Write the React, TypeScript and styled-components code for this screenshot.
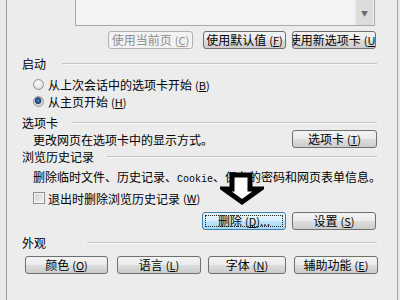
import styled, { createGlobalStyle, css } from "styled-components";

const GlobalStyle = createGlobalStyle`
  html, body {
    margin: 0;
    padding: 0;
    background: #e6e6e6;
  }
  body {
    font-family: "Noto Sans CJK SC", "Noto Sans", sans-serif;
    font-size: 12px;
    color: #000;
  }
`;

const Screen = styled.div`
  position: relative;
  width: 400px;
  height: 300px;
  overflow: hidden;
  display: flex;
  background: #e8e8e8;
`;

const Panel = styled.div`
  margin-left: 6px;
  width: 392px;
  box-sizing: border-box;
  padding: 0 20px 0 15px;
  border-left: 1px solid #9a9a9a;
  border-right: 1px solid #a8a8a8;
  background: #ececec;
  display: flex;
  flex-direction: column;
`;

const HomeBox = styled.div`
  margin-left: 53px;
  width: 300px;
  height: 26px;
  box-sizing: border-box;
  display: flex;
  justify-content: flex-end;
  border: 1px solid #a9a9a9;
  border-top: none;
  background: #f3f3f3;
`;

const ScrollBar = styled.div`
  width: 18px;
  margin-right: 1px;
  background: #dcdcdc;
  border-left: 1px solid #e8e8e8;
  display: flex;
  justify-content: center;
  align-items: flex-end;
  padding-bottom: 8px;
  box-sizing: border-box;
  color: #6a6a6a;
  font-size: 7px;
  line-height: 7px;
`;

const ButtonRow = styled.div<{ $mt: number; $justify?: string }>`
  display: flex;
  justify-content: ${(p) => p.$justify ?? "flex-end"};
  height: 18px;
  margin-top: ${(p) => p.$mt}px;
`;

const Button = styled.button<{
  $w: number;
  $ml?: number;
  $disabled?: boolean;
  $focus?: boolean;
}>`
  width: ${(p) => p.$w}px;
  height: 18px;
  margin: 0 0 0 ${(p) => p.$ml ?? 0}px;
  padding: 0;
  box-sizing: border-box;
  flex-shrink: 0;
  border: 1px solid #707070;
  border-radius: 3px;
  background: linear-gradient(#f3f3f3 0%, #ebebeb 48%, #dddddd 52%, #cdcdcd 100%);
  font-family: inherit;
  font-size: 12px;
  line-height: 16px;
  color: #000;
  display: flex;
  justify-content: center;
  align-items: center;
  overflow: hidden;
  white-space: nowrap;

  ${(p) =>
    p.$disabled &&
    css`
      color: #8e8e8e;
      border-color: #adb2b5;
      background: #f2f2f2;
    `}

  ${(p) =>
    p.$focus &&
    css`
      border-color: #3c7fb1;
      background: linear-gradient(#eaf6fd 0%, #d9f0fc 48%, #bee6fd 52%, #a7d9f5 100%);
      outline: 1px dotted #222;
      outline-offset: -4px;
    `}
`;

const Mn = styled.span`
  margin-left: 3px;
  font-size: 11px;
`;

const SectionHead = styled.div<{ $mt: number; $lineAt: number }>`
  display: flex;
  align-items: center;
  height: 14px;
  margin-top: ${(p) => p.$mt}px;

  & > span {
    width: ${(p) => p.$lineAt}px;
    flex-shrink: 0;
  }

  &::after {
    content: "";
    flex: 1;
    height: 1px;
    background: #c4c4c4;
    box-shadow: 0 1px 0 #f8f8f8;
  }
`;

const OptionRow = styled.div<{ $mt?: number; $h?: number }>`
  display: flex;
  align-items: center;
  height: ${(p) => p.$h ?? 17}px;
  margin-top: ${(p) => p.$mt ?? 0}px;
  padding-left: 11px;
`;

const Radio = styled.span<{ $on?: boolean }>`
  width: 11px;
  height: 11px;
  box-sizing: border-box;
  border-radius: 50%;
  border: 1px solid #939393;
  margin-right: 4px;
  background: radial-gradient(circle at 40% 35%, #ffffff 0, #e8e8e8 50%, #c8c8c8 100%);
  ${(p) =>
    p.$on &&
    css`
      background: radial-gradient(circle at 45% 40%, #6d9fd6 0, #2a5b99 1.5px, #163d70 3px, #cfcfcf 3.6px, #f4f4f4 100%);
    `}
`;

const Check = styled.span`
  width: 12px;
  height: 12px;
  box-sizing: border-box;
  margin-right: 3px;
  border: 1px solid #8e8f8f;
  background: linear-gradient(135deg, #cfcfcf, #f3f3f3);
  box-shadow: inset 0 0 0 1px #f6f6f6;
`;

const TextRow = styled.div<{ $mt: number; $h: number }>`
  display: flex;
  align-items: center;
  justify-content: space-between;
  height: ${(p) => p.$h}px;
  margin-top: ${(p) => p.$mt}px;
  padding-left: 11px;
  white-space: nowrap;
`;

const Mono = styled.span`
  font-family: "Liberation Mono", monospace;
  font-size: 10px;
`;

const Pointer = styled.svg`
  position: absolute;
  left: 220px;
  top: 171px;
`;

const Key = ({ k }: { k: string }) => (
  <Mn>
    (<u>{k}</u>)
  </Mn>
);

export default function App() {
  return (
    <Screen>
      <GlobalStyle />
      <Panel>
        <HomeBox>
          <ScrollBar>▼</ScrollBar>
        </HomeBox>

        <ButtonRow $mt={5}>
          <Button $w={85} $disabled>
            使用当前页<Key k="C" />
          </Button>
          <Button $w={83} $ml={10}>
            使用默认值<Key k="F" />
          </Button>
          <Button $w={84} $ml={6}>
            使用新选项卡<Key k="U" />
          </Button>
          <span style={{ width: 1 }} />
        </ButtonRow>

        <SectionHead $mt={7} $lineAt={40}>
          <span>启动</span>
        </SectionHead>
        <OptionRow $mt={6}>
          <Radio />
          从上次会话中的选项卡开始<Key k="B" />
        </OptionRow>
        <OptionRow>
          <Radio $on />
          从主页开始<Key k="H" />
        </OptionRow>

        <SectionHead $mt={5} $lineAt={50}>
          <span>选项卡</span>
        </SectionHead>
        <TextRow $mt={1} $h={18}>
          <span>更改网页在选项卡中的显示方式。</span>
          <Button $w={85}>
            选项卡<Key k="T" />
          </Button>
        </TextRow>

        <SectionHead $mt={1} $lineAt={85}>
          <span>浏览历史记录</span>
        </SectionHead>
        <TextRow $mt={5} $h={16}>
          <span>
            删除临时文件、历史记录、<Mono>Cookie</Mono>、保存的密码和网页表单信息。
          </span>
        </TextRow>
        <OptionRow $mt={6} $h={16}>
          <Check />
          退出时删除浏览历史记录<Key k="W" />
        </OptionRow>
        <ButtonRow $mt={6}>
          <Button $w={84} $focus>
            删除<Key k="D" />...
          </Button>
          <Button $w={84} $ml={6}>
            设置<Key k="S" />
          </Button>
          <span style={{ width: 1 }} />
        </ButtonRow>

        <SectionHead $mt={5} $lineAt={65}>
          <span>外观</span>
        </SectionHead>
        <ButtonRow $mt={7} $justify="flex-start">
          <Button $w={83} $ml={3}>
            颜色<Key k="O" />
          </Button>
          <Button $w={84} $ml={9}>
            语言<Key k="L" />
          </Button>
          <Button $w={78} $ml={7}>
            字体<Key k="N" />
          </Button>
          <Button $w={84} $ml={8}>
            辅助功能<Key k="E" />
          </Button>
        </ButtonRow>
      </Panel>

      <Pointer width="44" height="38" viewBox="0 0 44 38">
        <polygon
          points="12,4 30,4 30,18 40,18 22,31 4,18 12,18"
          fill="#ffffff"
          stroke="#000"
          strokeWidth="5"
          strokeLinejoin="miter"
        />
      </Pointer>
    </Screen>
  );
}
